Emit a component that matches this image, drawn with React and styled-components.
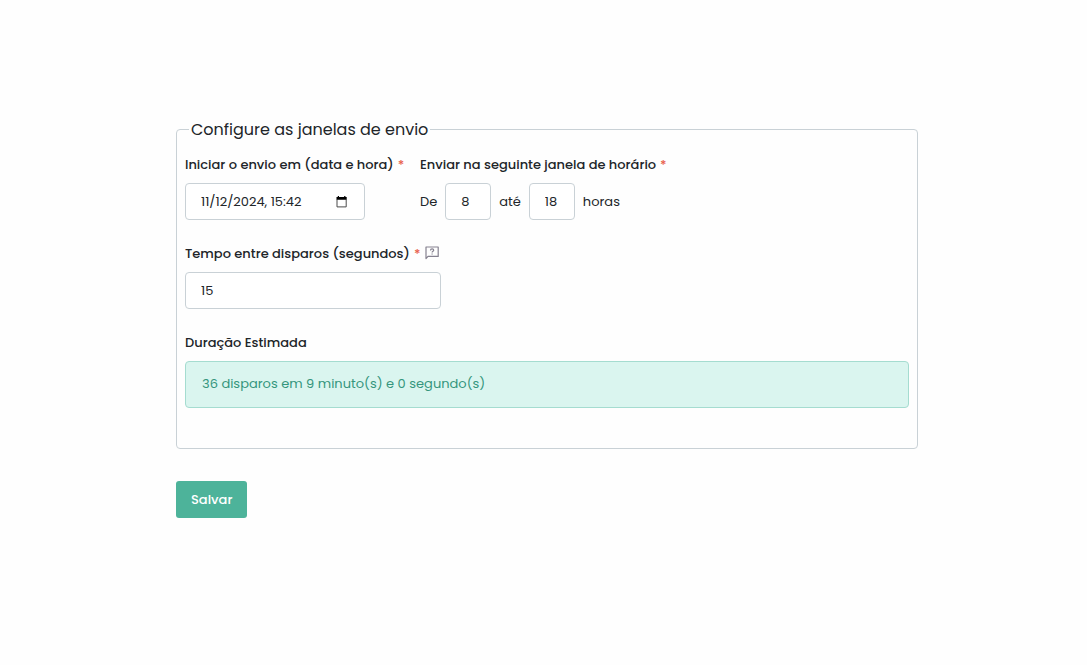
/* Send window settings */
import React, { useState } from 'react';
import styled, { createGlobalStyle } from 'styled-components';

const GlobalStyle = createGlobalStyle`
    * {
        box-sizing: border-box;
    }

    body {
        margin: 0;
        background: #FEFEFE;
        color: #212529;
        font-family: Poppins, Inter, sans-serif;
        font-size: 13px;
        line-height: 20px;
    }
`;

const Form = styled.form`
    padding: 116px 169px 32px 176px;
`;

const Fieldset = styled.fieldset`
    margin: 0 0 32px;
    padding: 13px 8px 40px;
    min-width: 0;
    border: 1px solid #C9D1D6;
    border-radius: 4px;
`;

const Legend = styled.legend`
    margin-left: 4px;
    padding: 2px 2px 0;
    font-size: 16px;
    line-height: 24px;
`;

const Row = styled.div`
    display: flex;
    flex-wrap: wrap;
    gap: 16px;
    margin-bottom: 24px;
`;

const Field = styled.div`
    width: ${props => props.$width || 'auto'};
`;

const Label = styled.label`
    display: flex;
    align-items: center;
    gap: 4px;
    margin-bottom: 8px;
    font-weight: 500;
    white-space: nowrap;
`;

const Required = styled.span`
    color: #E8604C;
`;

const InputBox = styled.div`
    display: flex;
    align-items: center;
    width: ${props => props.$width};
    height: 37px;
    padding: 0 14px 0 15px;
    background: #FFFFFF;
    border: 1px solid #C9D1D6;
    border-radius: 4px;

    &:focus-within {
        border-color: #4DB39A;
    }
`;

const Input = styled.input`
    flex: 1;
    width: 100%;
    min-width: 0;
    padding: 0;
    border: 0;
    outline: 0;
    background: transparent;
    color: inherit;
    font: inherit;
`;

const IconButton = styled.button`
    display: flex;
    padding: 0;
    margin: 2px;
    border: 0;
    background: transparent;
    color: ${props => props.$color || '#000000'};
    cursor: pointer;
`;

const LabelRow = styled.div`
    display: flex;
    align-items: flex-start;
    gap: 2px;
`;

const Hours = styled.div`
    display: flex;
    align-items: center;
    gap: 8px;
`;

const Estimate = styled.output`
    display: block;
    padding: 12px 16px 13px;
    background: #DAF5EF;
    border: 1px solid #A5DCD0;
    border-radius: 4px;
    color: #35967D;
`;

const SaveButton = styled.button`
    height: 37px;
    padding: 0 15px;
    border: 0;
    border-radius: 3px;
    background: #4DB39A;
    color: #FFFFFF;
    font: inherit;
    font-weight: 500;
    cursor: pointer;

    &:hover {
        filter: brightness(97%);
    }
`;

function CalendarIcon() {
    return (
        <svg width="12" height="12" viewBox="0 0 12 12" aria-hidden="true">
            <path d="M1 3.5v7.4h9.2V3.5" fill="none" stroke="#4A4A4A" />
            <path d="M.5 1h1.3V0H3v1h5.2V0h1.2v1h1.3v2.8H.5z" fill="currentColor" />
        </svg>
    );
}

function HelpIcon() {
    return (
        <svg width="14" height="14" viewBox="0 0 14 14" fill="none" stroke="currentColor" strokeWidth="1.2" aria-hidden="true">
            <path d="M1 12.6V1h12.2v9.4H3z" strokeLinejoin="round" />
            <path d="M5.5 4.4c0-1 .7-1.5 1.6-1.5s1.6.5 1.6 1.4c0 1-1.6 1.1-1.6 2.2" />
            <path d="M7.1 7.4v1.2" />
        </svg>
    );
}

function App() {
    const [start, setStart] = useState('11/12/2024, 15:42');
    const [from, setFrom] = useState('8');
    const [to, setTo] = useState('18');
    const [interval, setInterval] = useState('15');

    const shots = 36;
    const total = shots * (Number(interval) || 0);

    return (
        <>
            <GlobalStyle />
            <Form onSubmit={e => e.preventDefault()}>
                <Fieldset>
                    <Legend>Configure as janelas de envio</Legend>
                    <Row>
                        <Field $width="219px">
                            <Label htmlFor="start">Iniciar o envio em (data e hora) <Required>*</Required></Label>
                            <InputBox $width="180px">
                                <Input id="start" value={start} onChange={e => setStart(e.target.value)} />
                                <IconButton type="button" aria-label="Abrir calendário"><CalendarIcon /></IconButton>
                            </InputBox>
                        </Field>
                        <Field>
                            <Label htmlFor="from">Enviar na seguinte janela de horário <Required>*</Required></Label>
                            <Hours>
                                <span>De</span>
                                <InputBox $width="46px">
                                    <Input id="from" value={from} onChange={e => setFrom(e.target.value)} />
                                </InputBox>
                                <label htmlFor="to">até</label>
                                <InputBox $width="46px">
                                    <Input id="to" value={to} onChange={e => setTo(e.target.value)} />
                                </InputBox>
                                <span>horas</span>
                            </Hours>
                        </Field>
                    </Row>
                    <Row>
                        <Field>
                            <LabelRow>
                                <Label htmlFor="interval">Tempo entre disparos (segundos) <Required>*</Required></Label>
                                <IconButton type="button" aria-label="Ajuda" $color="#85818F"><HelpIcon /></IconButton>
                            </LabelRow>
                            <InputBox $width="256px">
                                <Input id="interval" value={interval} onChange={e => setInterval(e.target.value)} />
                            </InputBox>
                        </Field>
                    </Row>
                    <Label htmlFor="estimate">Duração Estimada</Label>
                    <Estimate id="estimate">
                        {`${shots} disparos em ${Math.floor(total / 60)} minuto(s) e ${total % 60} segundo(s)`}
                    </Estimate>
                </Fieldset>
                <SaveButton type="submit">Salvar</SaveButton>
            </Form>
        </>
    );
}

export default App;
